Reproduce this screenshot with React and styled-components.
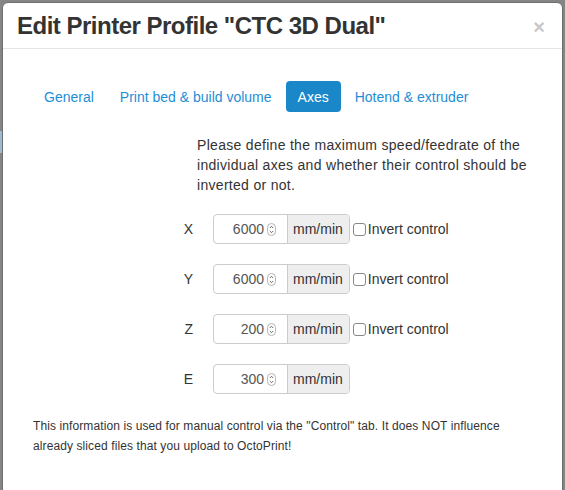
import React from "react";
import styled, { createGlobalStyle } from "styled-components";

const GlobalStyle = createGlobalStyle`
  html, body {
    margin: 0;
    padding: 0;
    background: #858585;
    font-family: "Liberation Sans", Arial, sans-serif;
  }
`;

const Page = styled.div`
  position: relative;
  width: 565px;
  height: 490px;
  overflow: hidden;
  padding: 2px 0 0 2px;
  box-sizing: border-box;
`;

const BackdropStripe = styled.div`
  position: absolute;
  left: 0;
  top: 131px;
  width: 3px;
  height: 22px;
  background: #9bbbd3;
`;

const Modal = styled.div`
  position: relative;
  width: 561px;
  height: 520px;
  background: #fff;
  border: 1px solid #6e6e6e;
  border-radius: 6px;
  box-sizing: border-box;
`;

const Header = styled.div`
  display: flex;
  align-items: flex-start;
  justify-content: space-between;
  height: 45px;
  padding: 0 17px 0 14px;
  border-bottom: 1px solid #e5e5e5;
  box-sizing: content-box;
`;

const Title = styled.h3`
  margin: 8px 0 0 0;
  font-size: 24px;
  font-weight: bold;
  letter-spacing: -0.5px;
  color: #333;
  line-height: 30px;
`;

const Close = styled.span`
  margin-top: 14px;
  font-size: 20px;
  font-weight: bold;
  color: #c8c8c8;
  line-height: 20px;
`;

const Body = styled.div`
  padding: 32px 15px 0 29px;
`;

const Tabs = styled.ul`
  display: flex;
  list-style: none;
  margin: 0 0 23px 0;
  padding: 0;
  gap: 2px;
`;

const Tab = styled.li`
  font-size: 14px;
  line-height: 20px;
  padding: 6px 12px 5px;
  border-radius: 4px;
  color: ${(p) => (p.$active ? "#fff" : "#1f8dd6")};
  background: ${(p) => (p.$active ? "#1a87c9" : "transparent")};
`;

const Intro = styled.p`
  margin: 0 0 19px 165px;
  width: 345px;
  font-size: 14px;
  letter-spacing: 0.3px;
  line-height: 20px;
  color: #333;
`;

const Rows = styled.div`
  display: flex;
  flex-direction: column;
  gap: 20px;
`;

const Row = styled.div`
  display: flex;
  align-items: center;
  height: 30px;
`;

const AxisLabel = styled.span`
  width: 181px;
  padding-right: 20px;
  text-align: right;
  font-size: 14px;
  color: #333;
  box-sizing: border-box;
`;

const InputGroup = styled.div`
  display: flex;
  height: 30px;
  border: 1px solid #ccc;
  border-radius: 4px;
  box-sizing: border-box;
  overflow: hidden;
`;

const NumberBox = styled.div`
  display: flex;
  align-items: center;
  justify-content: flex-end;
  width: 73px;
  padding-right: 11px;
  box-sizing: border-box;
  font-size: 14px;
  color: #555;
  gap: 3px;
`;

const Addon = styled.span`
  display: flex;
  align-items: center;
  padding: 0 6px 0 5px;
  background: #eee;
  border-left: 1px solid #ccc;
  font-size: 14px;
  color: #333;
`;

const CheckLabel = styled.label`
  display: flex;
  align-items: center;
  margin-left: 3px;
  font-size: 14px;
  color: #333;
`;

const Box = styled.span`
  display: inline-block;
  width: 11px;
  height: 11px;
  border: 1px solid #888;
  border-radius: 3px;
  margin-right: 2px;
  background: #fff;
`;

const Note = styled.p`
  margin: 22px 0 0 -29px;
  padding-left: 30px;
  width: 500px;
  font-size: 12px;
  letter-spacing: 0.1px;
  line-height: 20px;
  color: #333;
`;

function Spinner() {
  return (
    <svg width="9" height="13" viewBox="0 0 9 13">
      <rect x="0.5" y="0.5" width="8" height="12" rx="4" fill="#fff" stroke="#b5b5b5" />
      <path d="M2.8 5 L4.5 3.3 L6.2 5" fill="none" stroke="#555" strokeWidth="0.9" />
      <path d="M2.8 8 L4.5 9.7 L6.2 8" fill="none" stroke="#555" strokeWidth="0.9" />
    </svg>
  );
}

const axes = [
  { name: "X", value: 6000, invert: true },
  { name: "Y", value: 6000, invert: true },
  { name: "Z", value: 200, invert: true },
  { name: "E", value: 300, invert: false },
];

export default function App() {
  return (
    <>
      <GlobalStyle />
      <Page>
        <BackdropStripe />
        <Modal>
          <Header>
            <Title>Edit Printer Profile "CTC 3D Dual"</Title>
            <Close>×</Close>
          </Header>
          <Body>
            <Tabs>
              <Tab>General</Tab>
              <Tab>Print bed &amp; build volume</Tab>
              <Tab $active>Axes</Tab>
              <Tab>Hotend &amp; extruder</Tab>
            </Tabs>
            <Intro>
              Please define the maximum speed/feedrate of the individual axes and whether
              their control should be inverted or not.
            </Intro>
            <Rows>
              {axes.map((a) => (
                <Row key={a.name}>
                  <AxisLabel>{a.name}</AxisLabel>
                  <InputGroup>
                    <NumberBox>
                      {a.value}
                      <Spinner />
                    </NumberBox>
                    <Addon>mm/min</Addon>
                  </InputGroup>
                  {a.invert && (
                    <CheckLabel>
                      <Box />
                      Invert control
                    </CheckLabel>
                  )}
                </Row>
              ))}
            </Rows>
            <Note>
              This information is used for manual control via the "Control" tab. It does NOT
              influence already sliced files that you upload to OctoPrint!
            </Note>
          </Body>
        </Modal>
      </Page>
    </>
  );
}
